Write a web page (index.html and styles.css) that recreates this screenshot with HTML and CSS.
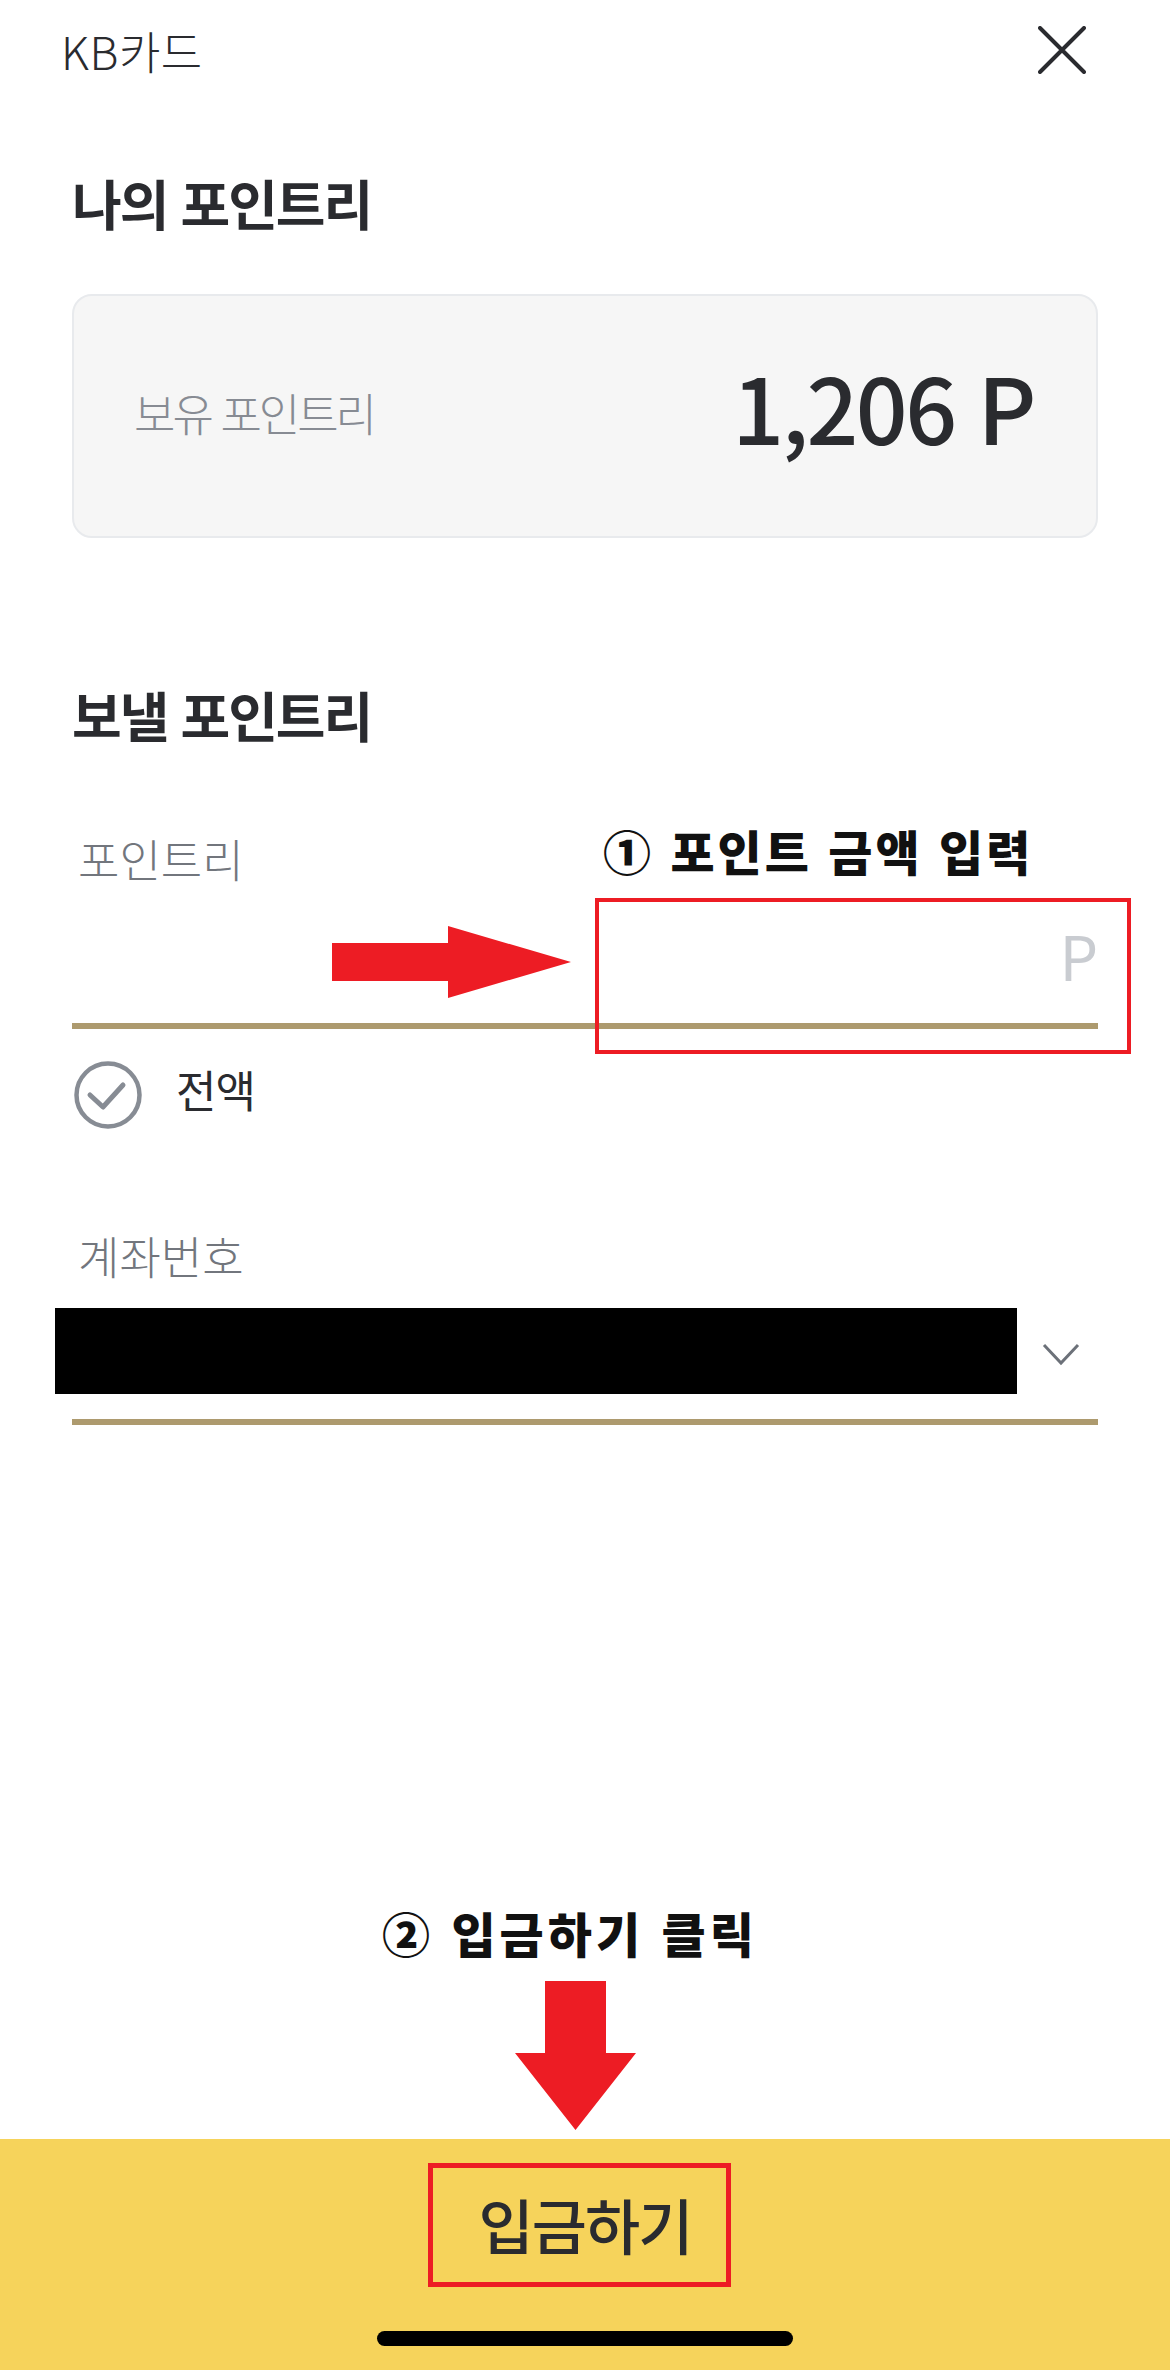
FILE: index.html
```html
<!DOCTYPE html>
<html lang="ko">
<head>
<meta charset="utf-8">
<title>KB카드 - 포인트리 입금</title>
<link rel="stylesheet" href="styles.css">
</head>
<body>
<div class="page">
  <header class="topbar">
    <span class="brand">KB카드</span>
    <button class="close" aria-label="닫기">
      <svg width="48" height="48" viewBox="0 0 48 48"><path d="M2 2 L46 46 M46 2 L2 46" stroke="#2a2b2f" stroke-width="4" stroke-linecap="round" fill="none"/></svg>
    </button>
  </header>

  <main class="content">
    <section class="my-points">
      <h2 class="section-title">나의 포인트리</h2>
      <div class="balance-card">
        <span class="balance-label">보유 포인트리</span>
        <span class="balance-value">1,206 P</span>
      </div>
    </section>

    <section class="send">
      <h2 class="section-title">보낼 포인트리</h2>
      <div class="field">
        <label class="field-label" for="amount">포인트리</label>
        <div class="input-row">
          <input id="amount" class="amount-input" type="text" aria-label="포인트리">
          <span class="unit">P</span>
        </div>
      </div>

      <div class="check-row">
        <svg class="check-icon" width="72" height="72" viewBox="0 0 72 72">
          <circle cx="36" cy="36" r="31.5" fill="none" stroke="#878c94" stroke-width="4.5"/>
          <path d="M18 36 L31 48 L51 26" fill="none" stroke="#878c94" stroke-width="5" stroke-linecap="round" stroke-linejoin="round"/>
        </svg>
        <span class="check-label">전액</span>
      </div>

      <div class="field account-field">
        <span class="field-label">계좌번호</span>
        <div class="select-row">
          <span class="redacted"></span>
          <svg class="chevron" width="40" height="24" viewBox="0 0 40 24"><path d="M3 3 L20 21 L37 3" fill="none" stroke="#6c7179" stroke-width="3"/></svg>
        </div>
      </div>
    </section>
  </main>

  <footer class="bottom-bar">
    <button class="submit">입금하기</button>
    <span class="home-indicator"></span>
  </footer>

  <span class="note note-1">① 포인트 금액 입력</span>
  <span class="red-box box-input"></span>
  <svg class="arrow arrow-right" width="240" height="72" viewBox="0 0 240 72"><polygon points="0,17 116,17 116,0 239,36 116,72 116,55 0,55" fill="#ed1c24"/></svg>

  <span class="note note-2">② 입금하기 클릭</span>
  <svg class="arrow arrow-down" width="121" height="149" viewBox="0 0 121 149"><polygon points="30,0 91,0 91,72 121,72 60.5,149 0,72 30,72" fill="#ed1c24"/></svg>
  <span class="red-box box-button"></span>
</div>
</body>
</html>
```
FILE: styles.css
```css
* { box-sizing: border-box; margin: 0; padding: 0; }
html, body { background: #ffffff; }
body {
  font-family: "Noto Sans CJK KR", "Noto Sans", sans-serif;
  color: #2a2b2f;
}

.page {
  position: relative;
  width: 1170px;
  min-height: 2370px;
  display: flex;
  flex-direction: column;
  overflow: hidden;
}

/* header */
.topbar {
  height: 100px;
  display: flex;
  align-items: center;
  justify-content: space-between;
  padding: 0 84px 0 61px;
}
.brand { font-size: 45px; font-weight: 300; line-height: 1; letter-spacing: 0.5px; }
.close {
  width: 48px; height: 48px;
  border: 0; background: none;
  display: flex; align-items: center; justify-content: center;
}

/* content */
.content { padding: 0 72px; }
.section-title {
  font-size: 54px;
  font-weight: 700;
  line-height: 60px;
  letter-spacing: -2px;
  color: #2a2b2f;
}
.my-points .section-title { margin-top: 73px; }

.balance-card {
  margin-top: 61px;
  height: 244px;
  border: 2px solid #e8eaed;
  border-radius: 20px;
  background: #f6f6f6;
  display: flex;
  align-items: center;
  justify-content: space-between;
  padding: 0 62px 0 60px;
}
.balance-label {
  font-size: 45px; font-weight: 300; line-height: 1;
  letter-spacing: -3px;
  color: #878b93;
  margin-bottom: 7px;
}
.balance-value {
  font-size: 91px; font-weight: 500; line-height: 1;
  letter-spacing: -2.5px;
  color: #2a2b2f;
  margin-bottom: 22px;
}

.send .section-title { margin-top: 147px; }

.field { display: flex; flex-direction: column; }
.field-label {
  margin-top: 88px;
  padding-left: 6px;
  font-size: 45px; font-weight: 300; line-height: 52px;
  letter-spacing: 0;
  color: #72767d;
}
.input-row {
  height: 144px;
  border-bottom: 6px solid #ad9a6e;
  display: flex;
  align-items: center;
}
.amount-input {
  flex: 1;
  border: 0; outline: 0; background: transparent;
  font: inherit; font-size: 61px;
  height: 80px;
}
.unit {
  font-size: 61px; font-weight: 400; line-height: 1;
  color: #c9ccd1;
}

.check-row {
  margin-top: 30px;
  height: 72px;
  display: flex;
  align-items: center;
  gap: 32px;
}
.check-icon { display: block; }
.check-label {
  font-size: 44px; font-weight: 400; line-height: 1;
  letter-spacing: -1px;
  color: #2a2b2f;
  margin-bottom: 12px;
}

.account-field .field-label { margin-top: 99px; }
.select-row {
  position: relative;
  height: 143px;
  padding-top: 6px;
  border-bottom: 6px solid #ad9a6e;
  display: flex;
  align-items: center;
  justify-content: flex-end;
}
.redacted {
  position: absolute;
  left: -17px; top: 26px;
  width: 962px; height: 86px;
  background: #000;
}
.chevron { display: block; margin-right: 17px; }

/* bottom */
.bottom-bar {
  margin-top: auto;
  height: 231px;
  background: #f6d35b;
  display: flex;
  flex-direction: column;
  align-items: center;
}
.submit {
  width: 100%;
  height: 170px;
  border: 0; background: transparent;
  font-family: inherit;
  font-size: 60px; font-weight: 500; line-height: 1;
  letter-spacing: -2px;
  color: #2a2b2f;
}
.home-indicator {
  display: block;
  margin-top: 22px;
  width: 416px; height: 15px;
  border-radius: 8px;
  background: #000;
}

/* annotations drawn over the screenshot */
.note {
  position: absolute;
  font-weight: 900;
  line-height: 1;
  color: #111111;
  white-space: nowrap;
}
.note-1 { left: 603px; top: 826px; font-size: 48px; letter-spacing: 3px; }
.note-2 { left: 382px; top: 1908px; font-size: 48px; letter-spacing: 4px; }
.red-box {
  position: absolute;
  border: 4px solid #ed1c24;
  background: transparent;
}
.box-input { left: 595px; top: 898px; width: 536px; height: 156px; }
.box-button { left: 428px; top: 2163px; width: 303px; height: 124px; border-width: 5px; }
.arrow { position: absolute; display: block; }
.arrow-right { left: 332px; top: 926px; }
.arrow-down { left: 515px; top: 1981px; }
```
